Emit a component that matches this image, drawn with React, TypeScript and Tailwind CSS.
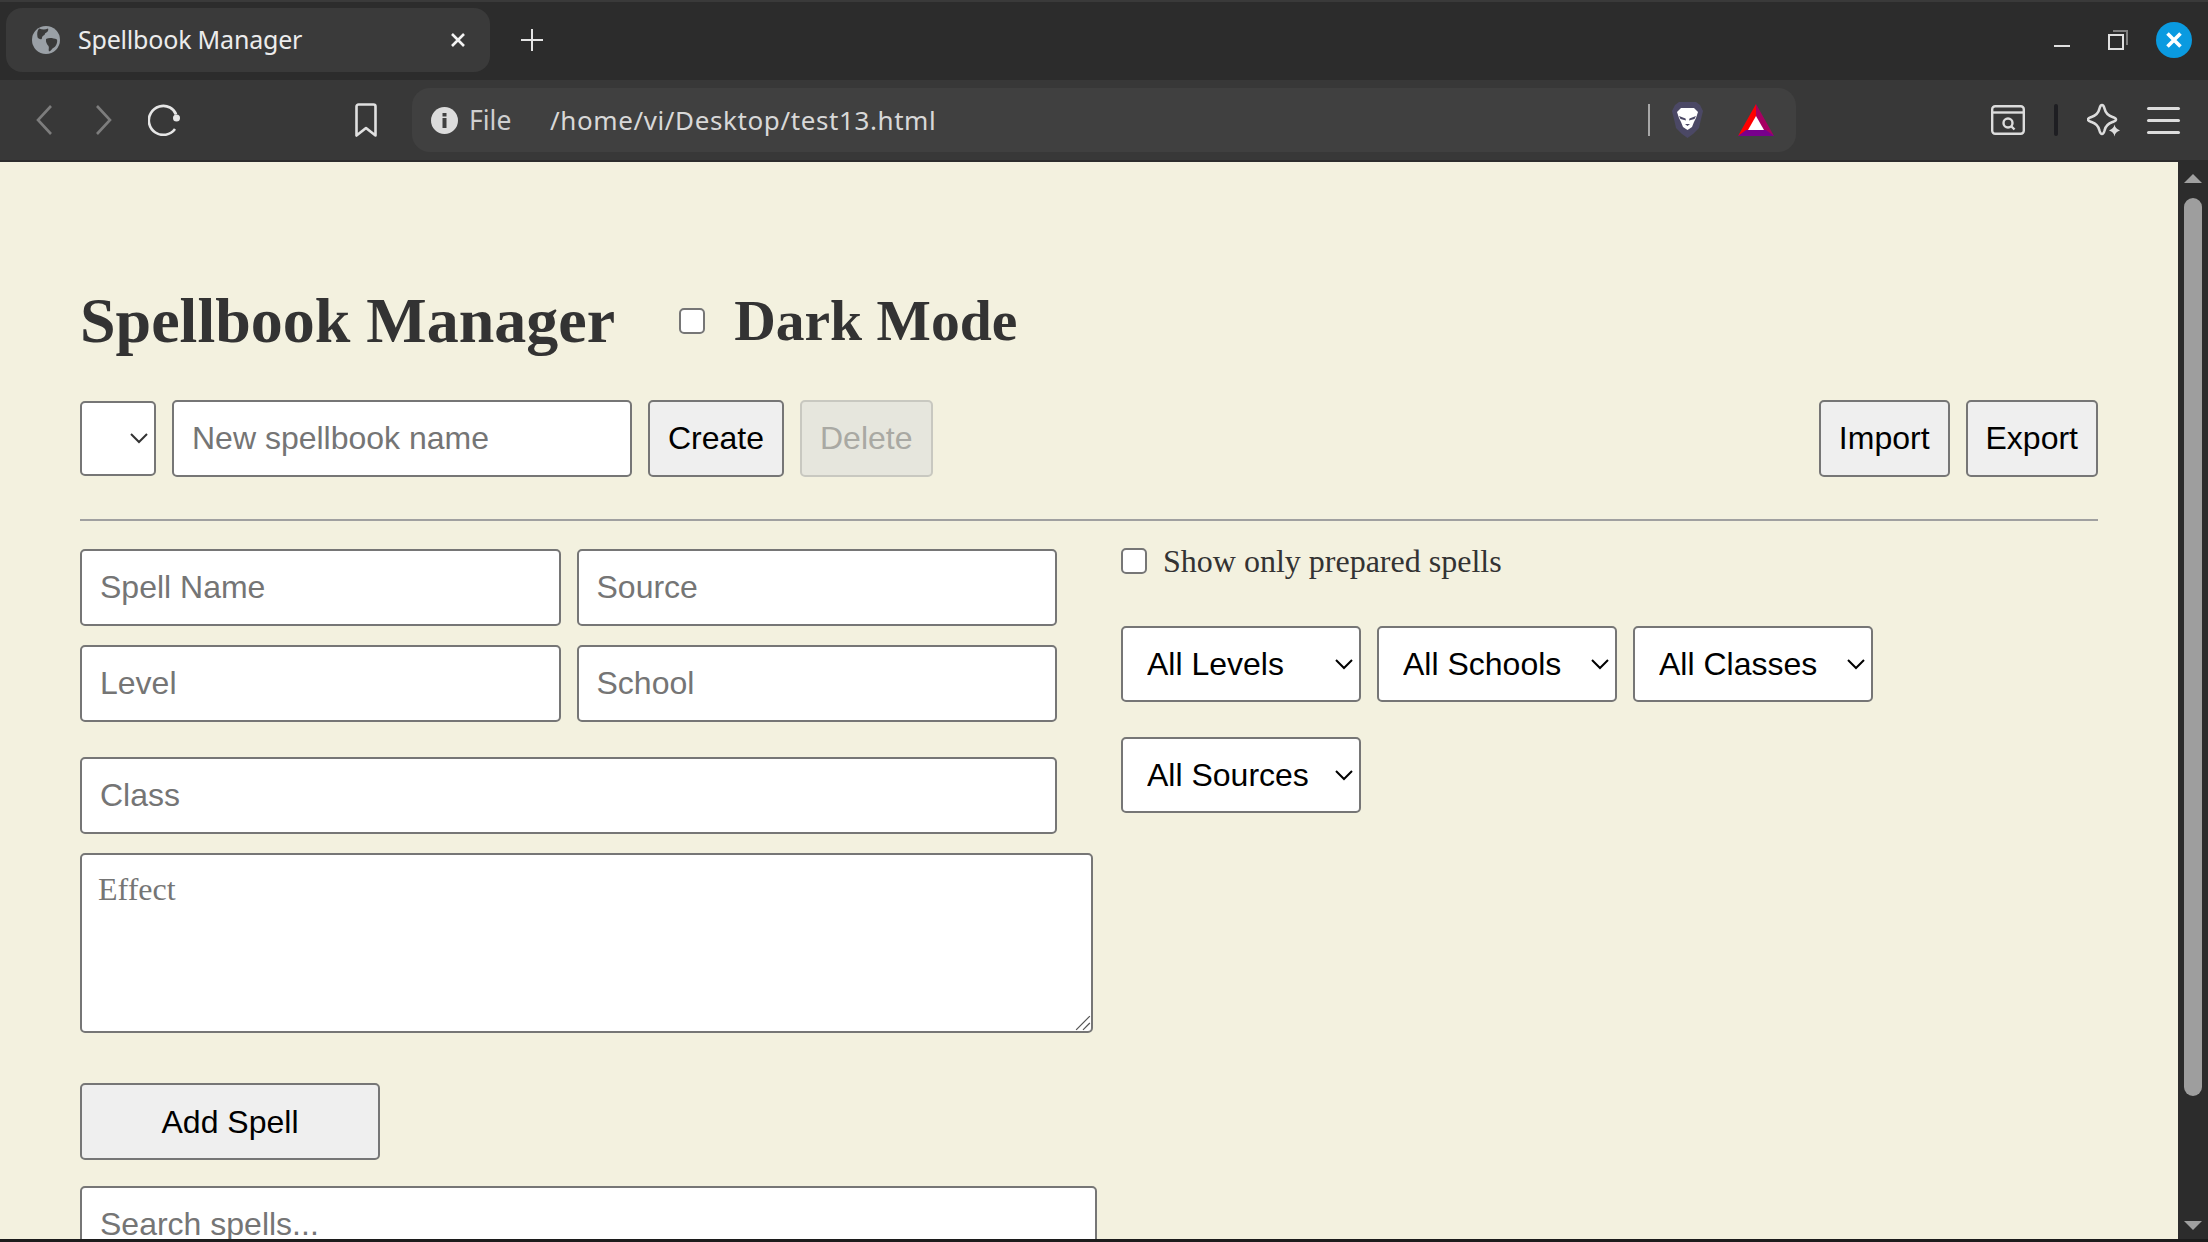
export default function App() {
  const input = "h-[38.4px] border border-[#767676] rounded-[2.5px] bg-white px-[9px] text-[16px] text-black placeholder:text-[#757575] font-['Liberation_Sans',sans-serif] outline-none";
  const btn = "h-[38.4px] border border-[#767676] rounded-[2.5px] bg-[#efefef] px-[9px] text-[16px] text-black font-['Liberation_Sans',sans-serif]";
  const sel = "appearance-auto w-[120px] h-[38px] border border-[#767676] rounded-[2.5px] bg-white pl-[8px] text-[16px] text-black font-['Liberation_Sans',sans-serif]";
  return (
    <div className="w-[2208px] h-[1242px] overflow-hidden flex flex-col bg-[#1c1c1c] font-['Noto_Sans',sans-serif]">
      {/* Tab strip */}
      <div className="h-[80px] shrink-0 bg-[#2c2c2c] border-t-2 border-[#3a3a3a] pb-[2px] flex items-center relative">
        <div className="ml-[6px] w-[484px] h-[64px] rounded-[16px] bg-[#3a3a3a] flex items-center text-[#ececec]">
          <svg className="ml-[26px]" width="28" height="28" viewBox="0 0 28 28">
            <circle cx="14" cy="14" r="14" fill="#9aa0a6" />
            <path d="M7 2.500c3 1 6 1.500 9 0 1 2-1 4-3 5 0 2-3 2-3 4.500 0 2.500-4 1-4.500-1C5 8 5 5 7 2.500z" fill="#3a3a3a" />
            <path d="M14 13c3-1.500 7-1 11 .5.800 3-1 7-3 8-2 .5-2.500 3.500-5 4-1-2 .5-3.500-.5-5.500-1.500-1.500-3-4-2.500-7z" fill="#3a3a3a" />
          </svg>
          <span className="ml-[18px] text-[25px] leading-none w-[372px] tracking-[-0.2px] pb-[1px]">Spellbook Manager</span>
          <svg width="16" height="16" viewBox="0 0 16 16"><path d="M2 2l12 12M14 2L2 14" stroke="#f4f4f4" strokeWidth="2.600" /></svg>
        </div>
        <svg className="ml-[31px]" width="22" height="22" viewBox="0 0 22 22"><path d="M11 0v22M0 11h22" stroke="#e4e4e4" strokeWidth="2" /></svg>
        <div className="ml-auto flex items-center">
          <div className="w-[16px] h-[2px] mt-[12px] bg-[#e0e0e0]" />
          <svg className="ml-[38px]" width="20" height="20" viewBox="0 0 20 20">
            <path d="M5 1h14v14" fill="none" stroke="#7f7f7f" strokeWidth="2" />
            <rect x="1" y="5" width="14" height="14" fill="none" stroke="#e0e0e0" strokeWidth="2" />
          </svg>
          <div className="ml-[28px] mr-[16px] w-[36px] h-[36px] rounded-full bg-[#0a9ae0] flex items-center justify-center">
            <svg width="18" height="18" viewBox="0 0 18 18"><path d="M2.500 2.500l13 13M15.500 2.500l-13 13" stroke="#fff" strokeWidth="3.600" /></svg>
          </div>
        </div>
      </div>
      {/* Toolbar */}
      <div className="h-[80px] shrink-0 bg-[#383838] flex items-center">
        <svg className="ml-[36px]" width="16" height="30" viewBox="0 0 16 30"><path d="M15 1L2 15l13 14" fill="none" stroke="#7d7d7d" strokeWidth="2.600" /></svg>
        <svg className="ml-[44px]" width="16" height="30" viewBox="0 0 16 30"><path d="M1 1l13 14L1 29" fill="none" stroke="#7d7d7d" strokeWidth="2.600" /></svg>
        <svg className="ml-[36px]" width="33" height="32" viewBox="0 0 33 32">
          <path d="M27 25a14.500 14.500 0 1 1-5-21.500c3 1.500 5 4 6 7" fill="none" stroke="#e6e6e6" strokeWidth="2.600" />
          <circle cx="28.500" cy="14" r="3.500" fill="#e6e6e6" />
        </svg>
        <svg className="ml-[173px]" width="24" height="34" viewBox="0 0 24 34"><path d="M2.500 3.500a2 2 0 0 1 2-2h15a2 2 0 0 1 2 2v29L12 25l-9.500 7.500z" fill="none" stroke="#e0e0e0" strokeWidth="2.600" strokeLinejoin="round" /></svg>
        <div className="ml-[34px] w-[1384px] h-[64px] rounded-[18px] bg-[#404040] flex items-center">
          <svg className="ml-[19px]" width="27" height="27" viewBox="0 0 27 27">
            <circle cx="13.500" cy="13.500" r="13.500" fill="#dcdcdc" />
            <rect x="11.500" y="11" width="4" height="10" fill="#404040" />
            <rect x="11.500" y="6" width="4" height="3.500" fill="#404040" />
          </svg>
          <span className="ml-[11px] w-[81px] text-[26.5px] leading-none text-[#cfcfcf]">File</span>
          <span className="text-[26px] leading-none text-[#d8d8d8] w-[1099px] tracking-[0.6px]">/home/vi/Desktop/test13.html</span>
          <div className="w-[2px] h-[32px] bg-[#a8a8a8] -ml-[1px]" />
          <svg className="ml-[22px]" width="31" height="36" viewBox="0 0 31 36">
            <path d="M7 0h17l4 3 3 6-2 8-2 9-6 6-5.500 4-5.500-4-6-6-2-9-2-8 3-6z" fill="#4b4865" />
            <path d="M9 6h13l4 4-2 6-2 4-2 5-4.500 3-4.500-3-2-5-2-4-2-6z" fill="#fff" />
            <path d="M7 14l6.500 2.500.5 2-5.500-1.500zM24 14l-6.500 2.500-.5 2 5.500-1.500zM13 22h5l-2.500 2z" fill="#4b4865" />
          </svg>
          <svg className="ml-[35px]" width="36" height="32" viewBox="0 0 36 32">
            <path d="M18 0L0 32l18-9z" fill="#ff0000" />
            <path d="M18 0l18 32-18-9z" fill="#a60062" />
            <path d="M0 32l8-6h20l8 6z" fill="#78008c" />
            <path d="M18 12l8 14H10z" fill="#fff" />
          </svg>
        </div>
        <svg className="ml-[195px]" width="34" height="30" viewBox="0 0 34 30" fill="none" stroke="#dcdcdc" strokeWidth="2.400">
          <rect x="1.200" y="1.200" width="31.600" height="27.600" rx="3" />
          <path d="M1.200 7.500h31.600" />
          <circle cx="17" cy="18" r="4.500" />
          <path d="M20.500 21.500l3 3" />
        </svg>
        <div className="ml-[29px] w-[4px] h-[32px] rounded-full bg-[#1e1e22]" />
        <svg className="ml-[29px]" width="34" height="34" viewBox="0 0 34 34" fill="none">
          <path d="M15 2c1.500 0 2 1.500 2.500 3.500 1 4.500 3.500 7 8 8.500 2 .7 3.500 1 3.500 2.500s-1.500 1.800-3.500 2.500c-4.500 1.500-7 4-8 8.500-.5 2-1 3.500-2.500 3.500s-2-1.500-2.500-3.500c-1-4.500-3.500-7-8-8.500-2-.7-3.500-1-3.500-2.500s1.500-1.800 3.500-2.500c4.500-1.500 7-4 8-8.500.5-2 1-3.500 2.500-3.500z" stroke="#dcdcdc" strokeWidth="2.600" />
          <path d="M27.500 21.500c.6 2.800 2 4.300 5.500 6-3.500 1.200-4.900 2.700-5.500 6-.6-3.300-2-4.800-5.500-6 3.500-1.700 4.900-3.200 5.500-6z" fill="#dcdcdc" />
        </svg>
        <div className="ml-[26px] w-[33px] flex flex-col gap-[9px]">
          <div className="h-[3px] rounded-full bg-[#dcdcdc]" />
          <div className="h-[3px] rounded-full bg-[#dcdcdc]" />
          <div className="h-[3px] rounded-full bg-[#dcdcdc]" />
        </div>
      </div>
      <div className="h-[2px] shrink-0 bg-[#2c2c2c]" />
      {/* Viewport */}
      <div className="h-[1077px] shrink-0 flex overflow-hidden">
        <div className="w-[2178px] h-full overflow-hidden bg-[#f3f1df]">
          <div className="[zoom:2] pt-[61px] px-[40px] text-[#333] font-['Liberation_Serif',serif]">
            <div className="flex items-center">
              <h1 className="text-[32px] font-bold leading-[37px]">Spellbook Manager</h1>
              <input type="checkbox" className="ml-[32px] w-[13px] h-[13px]" />
              <span className="ml-[14.5px] text-[28.8px] font-bold leading-[37px]">Dark Mode</span>
            </div>
            <div className="mt-[21px] flex items-center gap-[8px]">
              <select className="appearance-auto w-[38px] h-[37.5px] border border-[#767676] rounded-[2.5px] bg-white text-[16px] font-['Liberation_Sans',sans-serif]"><option></option></select>
              <input className={input + " w-[230px]"} placeholder="New spellbook name" />
              <button className={btn + " w-[68px]"}>Create</button>
              <button disabled className="h-[38.4px] border border-[#c8c8c0] rounded-[2.5px] bg-[#e6e6dd] px-[9px] text-[16px] text-[#a9a9a3] font-['Liberation_Sans',sans-serif]">Delete</button>
              <button className={btn + " ml-auto"}>Import</button>
              <button className={btn}>Export</button>
            </div>
            <div className="mt-[21.2px] h-px bg-[#a0a0a0]" />
            <div className="mt-[13.9px] flex items-start gap-[12px]">
              <div className="w-[508.5px] shrink-0 flex flex-col items-start">
                <div className="grid grid-cols-[240.25px_240.25px] gap-x-[8px] gap-y-[9.6px]">
                  <input className={input + " w-full"} placeholder="Spell Name" />
                  <input className={input + " w-full"} placeholder="Source" />
                  <input className={input + " w-full"} placeholder="Level" />
                  <input className={input + " w-full"} placeholder="School" />
                </div>
                <input className={input + " mt-[17.6px] w-[488.5px]"} placeholder="Class" />
                <div className="relative mt-[9.6px] w-[506.5px] h-[90px] flex">
                  <textarea className="w-full h-full border border-[#767676] rounded-[2.5px] bg-white px-[8px] pt-[5px] text-[16px] text-black placeholder:text-[#757575] outline-none resize-none font-['Liberation_Serif',serif]" placeholder="Effect" />
                  <svg className="absolute right-[1px] bottom-[1px]" width="8" height="8" viewBox="0 0 14 14"><path d="M1 13L13 1M7 13l6-6" stroke="#555" strokeWidth="1.100" fill="none" /></svg>
                </div>
                <button className={btn + " mt-[25.1px] w-[150px]"}>Add Spell</button>
                <input className={input + " mt-[13px] w-[508.5px]"} placeholder="Search spells..." />
              </div>
              <div className="flex-1">
                <label className="-mt-[3px] flex items-center text-[16px] leading-[18px] h-[18px]">
                  <input type="checkbox" className="w-[13px] h-[13px]" />
                  <span className="ml-[8px]">Show only prepared spells</span>
                </label>
                <div className="mt-[23.5px] flex flex-wrap gap-x-[8px] gap-y-[17.5px]">
                  <select className={sel}><option>All Levels</option></select>
                  <select className={sel}><option>All Schools</option></select>
                  <select className={sel}><option>All Classes</option></select>
                  <select className={sel}><option>All Sources</option></select>
                </div>
              </div>
            </div>
          </div>
        </div>
        <div className="w-[30px] h-full bg-[#2c2c2c] flex flex-col items-center">
          <svg className="mt-[12px]" width="18" height="9" viewBox="0 0 18 9"><path d="M9 0l9 9H0z" fill="#a0a0a0" /></svg>
          <div className="mt-[15px] w-[18px] h-[898px] rounded-full bg-[#9e9e9e]" />
          <svg className="mt-auto mb-[9px]" width="18" height="9" viewBox="0 0 18 9"><path d="M0 0h18L9 9z" fill="#a0a0a0" /></svg>
        </div>
      </div>
    </div>
  );
}
